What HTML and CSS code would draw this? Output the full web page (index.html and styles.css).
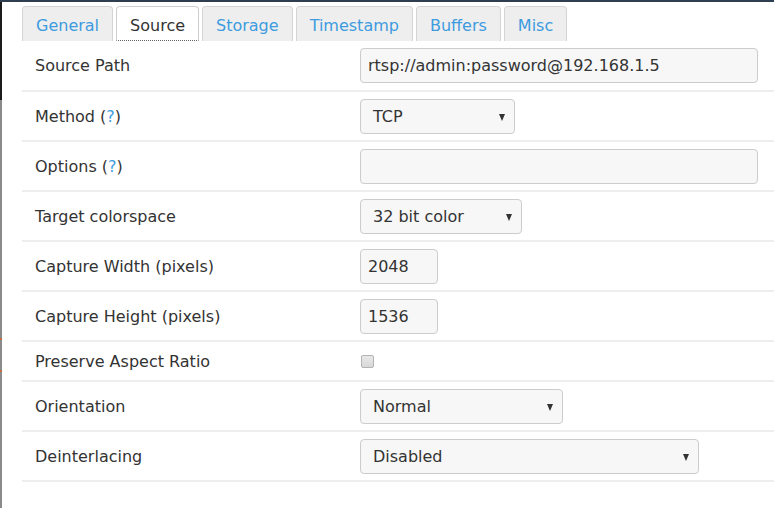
FILE: index.html
```html
<!DOCTYPE html>
<html lang="en">
<head>
  <meta charset="UTF-8">
  <meta name="viewport" content="width=device-width, initial-scale=1.0">
  <title>Monitor - Source</title>
  <link rel="stylesheet" href="styles.css">
</head>
<body>
  <div class="page">
    <!-- strip of the page behind the dialog -->
    <div class="edge"></div>

    <div class="panel">
      <!-- tabs -->
      <ul class="tabs">
        <li class="tab">General</li>
        <li class="tab active">Source</li>
        <li class="tab">Storage</li>
        <li class="tab">Timestamp</li>
        <li class="tab">Buffers</li>
        <li class="tab">Misc</li>
      </ul>

      <!-- settings table -->
      <div class="rows">
        <div class="row first">
          <div class="label">Source Path</div>
          <div class="field">
            <input type="text" class="input wide" value="rtsp://admin:password@192.168.1.5">
          </div>
        </div>

        <div class="row">
          <div class="label">Method (<span class="help">?</span>)</div>
          <div class="field">
            <span class="select w-method">TCP</span>
          </div>
        </div>

        <div class="row">
          <div class="label">Options (<span class="help">?</span>)</div>
          <div class="field">
            <input type="text" class="input wide" value="">
          </div>
        </div>

        <div class="row">
          <div class="label">Target colorspace</div>
          <div class="field">
            <span class="select w-color">32 bit color</span>
          </div>
        </div>

        <div class="row">
          <div class="label">Capture Width (pixels)</div>
          <div class="field">
            <input type="text" class="input small" value="2048">
          </div>
        </div>

        <div class="row">
          <div class="label">Capture Height (pixels)</div>
          <div class="field">
            <input type="text" class="input small" value="1536">
          </div>
        </div>

        <div class="row short">
          <div class="label">Preserve Aspect Ratio</div>
          <div class="field">
            <input type="checkbox" class="check">
          </div>
        </div>

        <div class="row">
          <div class="label">Orientation</div>
          <div class="field">
            <span class="select w-orient">Normal</span>
          </div>
        </div>

        <div class="row">
          <div class="label">Deinterlacing</div>
          <div class="field">
            <span class="select w-deint">Disabled</span>
          </div>
        </div>
      </div>
    </div>
  </div>
</body>
</html>
```

FILE: styles.css
```css
html, body {
  margin: 0;
  padding: 0;
  height: 100%;
}

body {
  font-family: "DejaVu Sans", Verdana, sans-serif;
  font-size: 16px;
  color: #333;
  background: #fff;
  border-top: 2px solid #2c3e50;
  box-sizing: border-box;
  overflow: hidden;
}

.page {
  display: flex;
  height: 100%;
}

/* 背景页面露出来的一条边 */
.edge {
  width: 2px;
  flex: none;
  background: linear-gradient(to bottom, #1b1b1b 0, #1b1b1b 98px, #8a8a8a 98px, #8a8a8a 336px, #c86a3a 336px, #c86a3a 338px, #8a8a8a 338px, #8a8a8a 368px, #c86a3a 368px, #c86a3a 370px, #8a8a8a 370px);
}

.panel {
  flex: 1;
  margin-left: 20px;
}

/* tabs */
.tabs {
  list-style: none;
  margin: 4px 0 0;
  padding: 0;
  display: flex;
  gap: 3px;
}

.tab {
  height: 31px;
  line-height: 31px;
  padding: 3px 13px 0;
  border: 1px solid #d4d4d4;
  border-bottom: none;
  border-radius: 4px 4px 0 0;
  background: #eeeeee;
  color: #3d9be0;
}

.tab.active {
  background: #fff;
  color: #333;
  border-color: #cfcfcf;
  height: 30px;
  border-bottom: 1px dotted #666;
}

/* rows */
.row {
  display: grid;
  grid-template-columns: 338px 1fr;
  align-items: center;
  height: 48px;
  border-bottom: 2px solid #eeeeee;
}

.row.first {
  height: 49px;
}

.row.short {
  height: 38px;
}

.label {
  padding-left: 13px;
}

.help {
  color: #3d9be0;
}

.field {
  display: flex;
  align-items: center;
}

.input {
  box-sizing: border-box;
  height: 35px;
  padding: 0 7px;
  border: 1px solid #cccccc;
  border-radius: 4px;
  background: #f7f7f7;
  font-family: inherit;
  font-size: 16px;
  color: #333;
  outline: none;
}

.input.wide {
  width: 398px;
}

.input.small {
  width: 78px;
}

.select {
  position: relative;
  box-sizing: border-box;
  display: block;
  height: 35px;
  line-height: 33px;
  padding-left: 12px;
  border: 1px solid #cccccc;
  border-radius: 4px;
  background: #f7f7f7;
  color: #333;
}

.select::after {
  content: "";
  position: absolute;
  right: 9px;
  top: 14px;
  border-left: 3.5px solid transparent;
  border-right: 3.5px solid transparent;
  border-top: 7px solid #333;
}

.w-method { width: 155px; }
.w-color { width: 162px; }
.w-orient { width: 203px; }
.w-deint { width: 339px; }

.check {
  appearance: none;
  -webkit-appearance: none;
  box-sizing: border-box;
  width: 13px;
  height: 13px;
  margin: 0 0 0 1px;
  border: 1px solid #b3b3b3;
  border-radius: 2px;
  background: linear-gradient(#e8e8e8, #d8d8d8);
}
```
